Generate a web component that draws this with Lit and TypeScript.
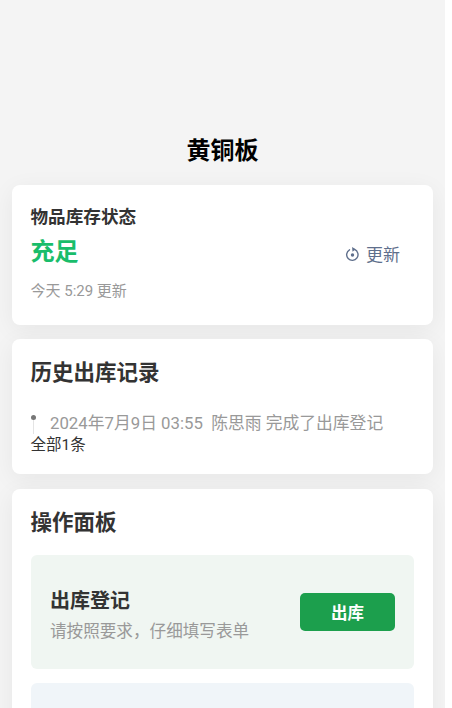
import { LitElement, html, css } from "lit";
import { customElement } from "lit/decorators.js";

@customElement("app-root")
export class AppRoot extends LitElement {
  static styles = css`
    :host {
      display: block;
      width: 452px;
      height: 708px;
      overflow: hidden;
      background: #fff;
      font-family: Roboto, "Noto Sans CJK SC", sans-serif;
    }
    .page {
      width: 445px;
      height: 708px;
      box-sizing: border-box;
      overflow: hidden;
      background: #f4f4f4;
      padding: 132px 12px 0;
      display: flex;
      flex-direction: column;
    }
    h1 {
      flex: none;
      margin: 0 0 17px;
      height: 36px;
      line-height: 38px;
      font-size: 24px;
      font-weight: 700;
      text-align: center;
      color: #000;
    }
    .card {
      flex: none;
      background: #fff;
      border-radius: 8px;
      box-shadow: 0 5px 24px rgba(0, 0, 0, 0.06);
      padding: 18px 19px 18px 18.5px;
      box-sizing: border-box;
    }
    .status {
      height: 140px;
      margin-bottom: 14px;
      display: flex;
      justify-content: space-between;
      align-items: flex-start;
      padding: 18px 33px 0 18.5px;
    }
    .label {
      font-size: 17.6px;
      line-height: 28px;
      font-weight: 700;
      color: #333;
    }
    .value {
      font-size: 24px;
      line-height: 38px;
      font-weight: 700;
      color: #19bd6b;
      margin-top: 2px;
    }
    .time {
      margin-top: 9px;
      font-size: 15px;
      line-height: 22px;
      color: #999;
    }
    .refresh {
      display: flex;
      align-items: center;
      gap: 6px;
      margin-top: 39px;
      font-size: 17px;
      line-height: 26px;
      color: #5f6f8c;
    }
    .refresh svg { width: 15px; height: 15px; display: block; margin-top: -1px; }
    .history { height: 135px; margin-bottom: 15px; padding-top: 17px; }
    h2 {
      margin: 0;
      font-size: 21.5px;
      line-height: 34px;
      font-weight: 700;
      color: #333;
    }
    .log {
      margin-top: 22px;
      height: 22px;
      display: flex;
      align-items: center;
      gap: 13.5px;
      font-size: 16.8px;
      line-height: 22px;
      color: #999;
      white-space: pre;
    }
    .mark {
      width: 6px;
      height: 22px;
      flex: none;
      display: flex;
      flex-direction: column;
      align-items: center;
      align-self: flex-start;
      padding-top: 3px;
      box-sizing: border-box;
    }
    .dot { width: 5px; height: 5px; flex: none; border-radius: 50%; background: #777; }
    .line { width: 1px; flex: 1; background: #e4e4e4; }
    .all { font-size: 15.5px; line-height: 22px; color: #333; }
    .panel { padding-top: 17px; height: 400px; }
    .op {
      border-radius: 6px;
      display: flex;
      align-items: center;
      justify-content: space-between;
      padding: 0 19px 0 19.5px;
      height: 114px;
      margin-top: 15px;
    }
    .op + .op { margin-top: 14px; }
    .green { background: #f0f6f2; }
    .blue { background: #f0f5f9; }
    .op-text { margin-top: 6px; }
    .op-title { font-size: 20px; line-height: 30px; font-weight: 700; color: #333; }
    .op-desc { font-size: 16.6px; line-height: 26px; color: #999; margin-top: 3px; }
    button {
      width: 95px;
      height: 38px;
      border: 0;
      border-radius: 5px;
      background: #1c9f4d;
      color: #fff;
      font: 700 16.5px Roboto, "Noto Sans CJK SC", sans-serif;
      padding: 0;
    }
  `;

  render() {
    return html`
      <div class="page">
        <h1>黄铜板</h1>
        <section class="card status">
          <div>
            <div class="label">物品库存状态</div>
            <div class="value">充足</div>
            <div class="time">今天 5:29 更新</div>
          </div>
          <div class="refresh">
            <svg viewBox="0 0 14 14" fill="none" stroke="currentColor" stroke-width="1.3">
              <path d="M8.9 2.3A5.3 5.3 0 1 1 4.2 2.6" stroke-linecap="round" />
              <path d="M6.6 0 10 2.2 7 4.4Z" fill="currentColor" stroke="none" />
              <circle cx="7" cy="7.4" r="1.6" fill="currentColor" stroke="none" />
            </svg>
            <span>更新</span>
          </div>
        </section>
        <section class="card history">
          <h2>历史出库记录</h2>
          <div class="log">
            <div class="mark"><span class="dot"></span><span class="line"></span></div>
            <span>2024年7月9日 03:55  陈思雨 完成了出库登记</span>
          </div>
          <div class="all">全部1条</div>
        </section>
        <section class="card panel">
          <h2>操作面板</h2>
          <div class="op green">
            <div class="op-text">
              <div class="op-title">出库登记</div>
              <div class="op-desc">请按照要求，仔细填写表单</div>
            </div>
            <button>出库</button>
          </div>
          <div class="op blue"></div>
        </section>
      </div>
    `;
  }
}
